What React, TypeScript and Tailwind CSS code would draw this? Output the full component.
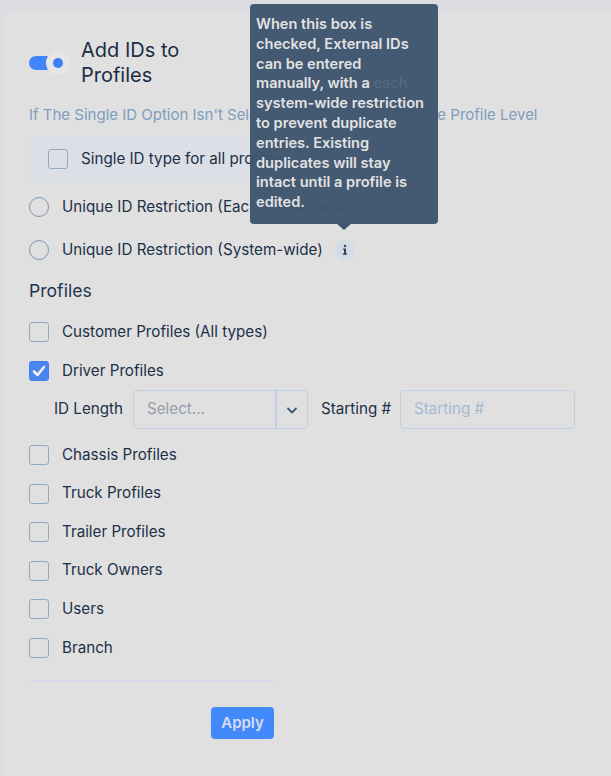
const profiles2 = ["Chassis Profiles", "Truck Profiles", "Trailer Profiles", "Truck Owners", "Users", "Branch"];

function Box({ checked = false }: { checked?: boolean }) {
  return checked ? (
    <span className="flex h-5 w-5 shrink-0 items-center justify-center rounded-[3px] bg-[#4a86f0] border border-[#3f7fee]">
      <svg viewBox="0 0 16 16" className="h-4 w-4" fill="none" stroke="#f2f2f2" strokeWidth="2.6" strokeLinecap="round" strokeLinejoin="round">
        <path d="M3 8.5 6.5 12 13 4" />
      </svg>
    </span>
  ) : (
    <span className="block h-5 w-5 shrink-0 rounded-[3px] border border-[#94a8c0]" />
  );
}

function Radio() {
  return <span className="block h-5 w-5 shrink-0 rounded-full border border-[#7f95b0]" />;
}

export default function App() {
  return (
    <div className="h-[776px] w-[611px] overflow-hidden bg-[#dcdde1] pl-1 pt-[13px] text-[15.2px] text-[#1c3048] [font-family:Inter,sans-serif]">
      <div className="relative h-[763px] w-full bg-[#e0e0e0] pl-[25px] pt-[25px]">
        <div className="flex h-[50px] items-center">
          <div className="relative flex h-3.5 w-[39px] items-center">
            <span className="h-[14px] w-[30px] rounded-full bg-[#4285fb]" />
            <span className="absolute left-[17px] top-[-5px] flex h-6 w-6 items-center justify-center rounded-full bg-[#e6e6e6]">
              <span className="h-[10px] w-[10px] rounded-full bg-[#3f7ff5]" />
            </span>
          </div>
          <h1 className="ml-[13px] w-[120px] text-[20px] font-normal leading-[25px] text-[#1c2c44]">Add IDs to Profiles</h1>
        </div>

        <p className="mt-[17px] h-[20px] whitespace-nowrap text-[15px] leading-[20px] text-[#7f9dbf]">
          If The Single ID Option Isn't Selected, ID Type Is Set At The Profile Level
        </p>

        <div className="mt-[11px] flex h-[46px] w-[245px] items-center rounded-md bg-[#dcdfe5] pl-[19px]">
          <Box />
          <span className="ml-[13px] whitespace-nowrap">Single ID type for all profiles</span>
        </div>

        <label className="mt-[15px] flex h-[20px] items-center gap-[13px]">
          <Radio />
          <span>Unique ID Restriction (Each Profile-wise)</span>
        </label>

        <label className="mt-[23px] flex h-[20px] items-center gap-[13px]">
          <Radio />
          <span>Unique ID Restriction (System-wide)</span>
          <span className="-ml-[1px] flex h-5 w-5 items-center justify-center rounded-full bg-[#d3dbe6]">
            <svg viewBox="0 0 10 12" className="h-3 w-[10px]" fill="#2f4258">
              <circle cx="5" cy="2" r="1.2" />
              <path d="M3 4.5h3v5h1.2v1.2H2.8V9.5H4V5.7H3z" />
            </svg>
          </span>
        </label>

        <h2 className="mt-[21px] text-[17.6px] font-normal leading-[20px] text-[#1f3550]">Profiles</h2>

        <div className="mt-[21px] flex h-[20px] items-center gap-[13px]">
          <Box />
          <span>Customer Profiles (All types)</span>
        </div>

        <div className="mt-[19px] flex h-[20px] items-center gap-[13px]">
          <Box checked />
          <span>Driver Profiles</span>
        </div>

        <div className="mt-[9px] flex h-[39px] items-center pl-[25px]">
          <span className="w-[79px]">ID Length</span>
          <div className="flex h-[39px] w-[175px] rounded-[4px] border border-[#bfd0e2]">
            <span className="flex flex-1 items-center pl-[13px] text-[#969ea9]">Select...</span>
            <span className="flex w-[32px] items-center justify-center border-l-2 border-[#bfd0e2]">
              <svg viewBox="0 0 12 12" className="h-3 w-3" fill="none" stroke="#3f5570" strokeWidth="1.8" strokeLinecap="round" strokeLinejoin="round">
                <path d="M2 4.5 6 8.5 10 4.5" />
              </svg>
            </span>
          </div>
          <span className="ml-[13px] w-[79px] whitespace-nowrap">Starting #</span>
          <div className="flex h-[39px] w-[175px] items-center rounded-[4px] border border-[#bfd0e2] pl-[13px] text-[#a3bad3]">
            Starting #
          </div>
        </div>

        <div className="mt-[16px] flex flex-col gap-[18.6px]">
          {profiles2.map((p) => (
            <div key={p} className="flex h-[20px] items-center gap-[13px]">
              <Box />
              <span>{p}</span>
            </div>
          ))}
        </div>

        <div className="mt-[22px] h-[2px] w-[245px] bg-[#d5dbe8]" />

        <div className="mt-[25px] flex w-[245px] justify-end">
          <button className="h-8 w-[63px] rounded-[4px] bg-[#4289fb] text-[15px] font-semibold text-[#dcdcf0]">Apply</button>
        </div>

        <div className="absolute left-[246px] top-[-9px] w-[188px] rounded-[4px] bg-[#40566f]/[0.98] pb-[11px] pl-[6px] pr-[8px] pt-[11px] text-[14.6px] font-semibold leading-[19.8px] text-[#e2e2e2]">
          When this box is checked, External IDs can be entered manually, with a <span className="font-normal text-[#56697f]">each</span> system-wide restriction to prevent duplicate entries. Existing duplicates will stay intact until a profile is edited.
          <span className="absolute bottom-[-6px] left-[87px] h-0 w-0 border-x-[7px] border-t-[6px] border-x-transparent border-t-[#40566f]" />
        </div>
      </div>
    </div>
  );
}
